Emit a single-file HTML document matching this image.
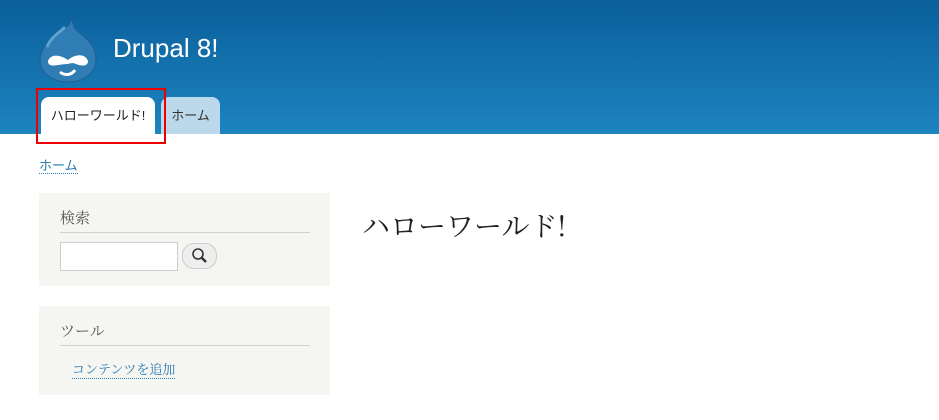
<!DOCTYPE html>
<html><head><meta charset="utf-8"><style>
body{margin:0;width:939px;height:420px;background:#fff;position:relative;overflow:hidden;font-family:"Liberation Sans","Noto Sans CJK JP",sans-serif}
.hdr{position:absolute;left:0;top:0;width:939px;height:134px;background:linear-gradient(#0a5f9a,#1d84c0)}
.title{position:absolute;left:113px;top:33px;color:#fff;font-size:26px}
.tab{position:absolute;top:97px;height:37px;border-radius:8px 8px 0 0;font-size:13px;line-height:38px;text-align:center}
.red{position:absolute;left:36px;top:88px;width:130px;height:56px;border:2px solid #e00;box-sizing:border-box}
a{color:#2a7ab0;text-decoration:none;border-bottom:1px dotted #2a7ab0}
.blk{position:absolute;left:39px;width:291px;background:#f5f5f2}
.bt{position:absolute;left:21px;width:250px;border-bottom:1px solid #d0d0cc;font-size:15px;color:#555;font-family:"Noto Serif CJK SC",serif;padding-bottom:4px}
</style></head><body>
<div class="hdr"></div>
<svg style="position:absolute;left:39px;top:17px" width="58" height="66" viewBox="0 0 58 66">
<path d="M33 1 C32 10 20 14 10 24 C3 31 1 38 1 44 C1 56 14 65 29 65 C45 65 57 56 57 42 C57 24 40 18 35 10 C34 7 33 4 33 1Z" fill="#2f7db4" stroke="#1f5f8e" stroke-width="1"/>
<path d="M26 10 C20 16 12 20 8 30" stroke="#5fa3d0" stroke-width="3" fill="none"/>
<path d="M9 44 C12 36 22 38 29 43 C36 37 46 36 49 44 C49 50 42 49 37 47 C33 45 30 47 28 47 C20 47 9 52 9 44Z" fill="#fff"/>
<path d="M21 55 C26 59 33 58 36 53" stroke="#fff" stroke-width="3" fill="none"/>
</svg>
<div class="title">Drupal 8!</div>
<div class="tab" style="left:41px;width:114px;background:#fff;color:#222">ハローワールド!</div>
<div class="tab" style="left:161px;width:59px;background:#bcd9ec;color:#333">ホーム</div>
<div class="red"></div>
<div style="position:absolute;left:39px;top:155px;font-size:13px"><a>ホーム</a></div>
<div class="blk" style="top:193px;height:93px">
<div class="bt" style="top:14px">検索</div>
<div style="position:absolute;left:21px;top:49px;width:116px;height:27px;border:1px solid #ccc;background:#fff"></div>
<div style="position:absolute;left:143px;top:50px;width:33px;height:24px;border-radius:12px;background:#eee;border:1px solid #ccc">
<svg width="33" height="24"><circle cx="15" cy="10" r="5" fill="none" stroke="#333" stroke-width="1.6"/><path d="M18.5 13.5 L23 18" stroke="#333" stroke-width="2.4"/></svg></div>
</div>
<div class="blk" style="top:306px;height:89px">
<div class="bt" style="top:14px">ツール</div>
<div style="position:absolute;left:33px;top:53px;font-size:13px;font-family:'Noto Serif CJK SC',serif"><a>コンテンツを追加</a></div>
</div>
<div style="position:absolute;left:362px;top:205px;font-size:28px;color:#222;font-family:'Noto Serif CJK SC',serif">ハローワールド!</div>
</body></html>
